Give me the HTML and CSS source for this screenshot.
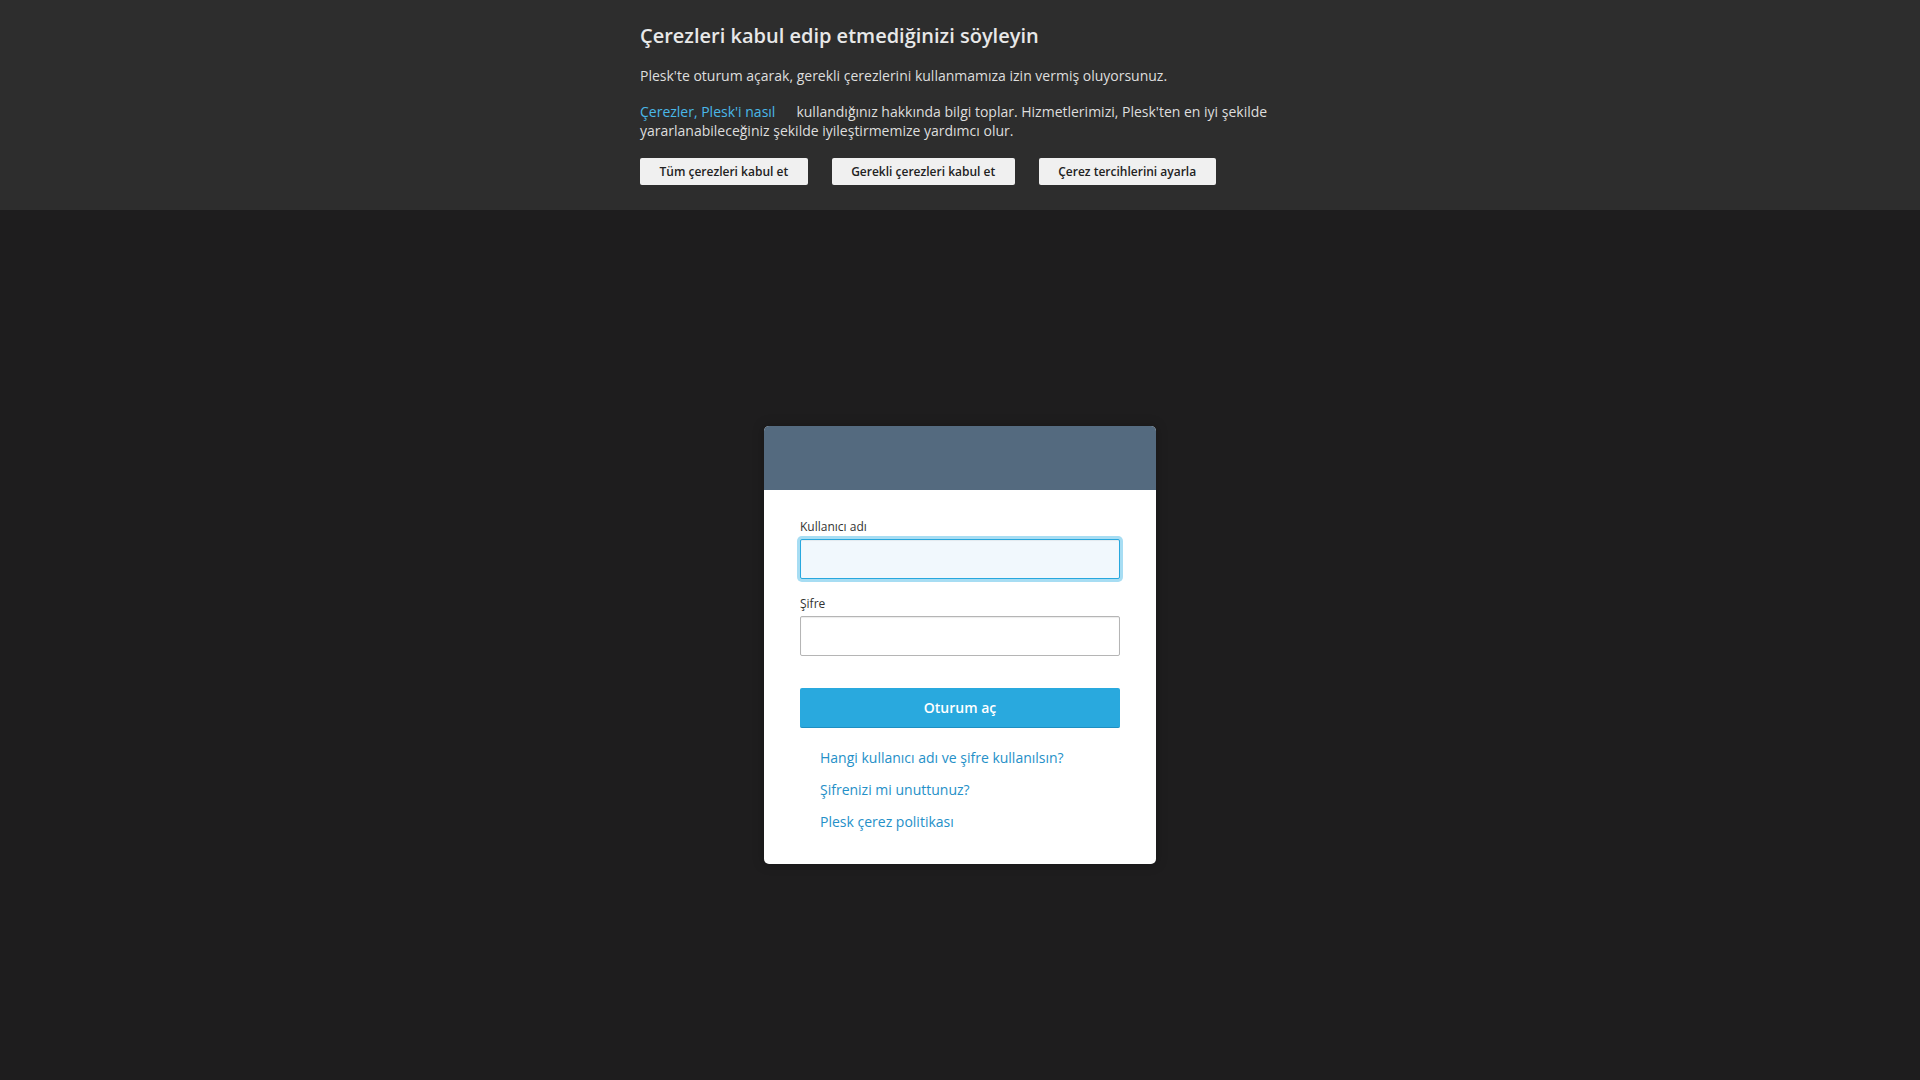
FILE: index.html
```html
<!DOCTYPE html>
<html lang="tr">
<head>
    <meta charset="UTF-8">
    <meta name="viewport" content="width=device-width, initial-scale=1.0">
    <title>Plesk Obsidian</title>
    <link rel="stylesheet" href="styles.css">
</head>
<body>
    <div class="cookie-banner">
        <div class="cookie-inner">
            <h2 class="cookie-title">Çerezleri kabul edip etmediğinizi söyleyin</h2>
            <p class="cookie-text">Plesk'te oturum açarak, gerekli çerezlerini kullanmamıza izin vermiş oluyorsunuz.</p>
            <p class="cookie-text"><a href="#" class="cookie-link">Çerezler, Plesk'i nasıl</a><span class="cookie-gap"></span>kullandığınız hakkında bilgi toplar. Hizmetlerimizi, Plesk'ten en iyi şekilde yararlanabileceğiniz şekilde iyileştirmemize yardımcı olur.</p>
            <div class="cookie-actions">
                <button class="cookie-button">Tüm çerezleri kabul et</button>
                <button class="cookie-button">Gerekli çerezleri kabul et</button>
                <button class="cookie-button">Çerez tercihlerini ayarla</button>
            </div>
        </div>
    </div>

    <div class="login-page">
        <div class="login-box">
            <div class="login-header"></div>
            <form class="login-body" onsubmit="return false;">
                <div class="form-group">
                    <label for="login_name" class="form-label">Kullanıcı adı</label>
                    <input type="text" id="login_name" class="form-input is-focused">
                </div>
                <div class="form-group">
                    <label for="passwd" class="form-label">Şifre</label>
                    <input type="password" id="passwd" class="form-input">
                </div>
                <button type="submit" class="login-button">Oturum aç</button>
                <ul class="login-links">
                    <li><a href="#">Hangi kullanıcı adı ve şifre kullanılsın?</a></li>
                    <li><a href="#">Şifrenizi mi unuttunuz?</a></li>
                    <li><a href="#">Plesk çerez politikası</a></li>
                </ul>
            </form>
        </div>
    </div>
</body>
</html>
```

FILE: styles.css
```css
* {
    box-sizing: border-box;
}

html,
body {
    height: 100%;
}

body {
    font-family: "Open Sans", "Noto Sans", Arial, sans-serif;
    margin: 0;
    padding: 0;
    background-color: #1e1d1e;
    display: flex;
    flex-direction: column;
}

.cookie-banner {
    background-color: #2d2d2d;
    padding: 22px 0 25px;
}

.cookie-inner {
    width: 640px;
    margin: 0 auto;
}

.cookie-title {
    margin: 0 0 16px;
    font-size: 20px;
    font-weight: 600;
    line-height: 28px;
    color: #e8e8e8;
}

.cookie-text {
    margin: 0 0 16px;
    font-size: 14px;
    line-height: 1.4;
    color: #dedede;
}

.cookie-link {
    color: #4ab8e8;
    text-decoration: none;
}

.cookie-gap {
    display: inline-block;
    width: 21px;
}

.cookie-actions {
    display: flex;
    gap: 24px;
    margin-top: 17px;
}

.cookie-button {
    font-family: inherit;
    font-size: 12px;
    font-weight: 600;
    line-height: 17px;
    height: 27px;
    padding: 5px 19.5px;
    color: #222;
    background-color: #f0f0f0;
    border: none;
    border-radius: 2px;
    cursor: pointer;
}

.login-page {
    flex: 1;
    display: flex;
    align-items: center;
    justify-content: center;
}

.login-box {
    width: 392px;
    background: white;
    border-radius: 5px;
    box-shadow: 0 0 12px rgba(0, 0, 0, 0.25);
    overflow: hidden;
}

.login-header {
    height: 64px;
    background-color: #546a7f;
}

.login-body {
    padding: 28px 36px 32px;
    margin: 0;
}

.form-group {
    margin-bottom: 16px;
}

.form-label {
    display: block;
    font-size: 12px;
    line-height: 18px;
    margin-bottom: 3px;
    color: #333;
}

.form-input {
    display: block;
    width: 100%;
    height: 40px;
    padding: 0 10px;
    font-family: inherit;
    font-size: 14px;
    border: 1px solid #b5b5b5;
    border-radius: 2px;
    background: white;
    box-shadow: inset 0 1px 1px rgba(0, 0, 0, 0.08);
    outline: none;
}

.form-input.is-focused {
    border-color: #28a8de;
    background-color: #f1f8fd;
    box-shadow: inset 0 1px 1px rgba(0, 0, 0, 0.06), 0 0 0 3px #a7ddf3;
}

.login-button {
    display: block;
    width: 100%;
    height: 40px;
    margin-top: 32px;
    font-family: inherit;
    font-size: 14px;
    font-weight: 600;
    color: white;
    background-color: #29a9de;
    border: none;
    border-bottom: 1px solid #1e8fc2;
    border-radius: 2px;
    cursor: pointer;
}

.login-links {
    list-style: none;
    margin: 20px 0 0;
    padding: 0 0 0 20px;
}

.login-links li {
    font-size: 14px;
    line-height: 20px;
    margin-top: 12px;
}

.login-links li:first-child {
    margin-top: 0;
}

.login-links a {
    color: #2590c8;
    text-decoration: none;
}
```
